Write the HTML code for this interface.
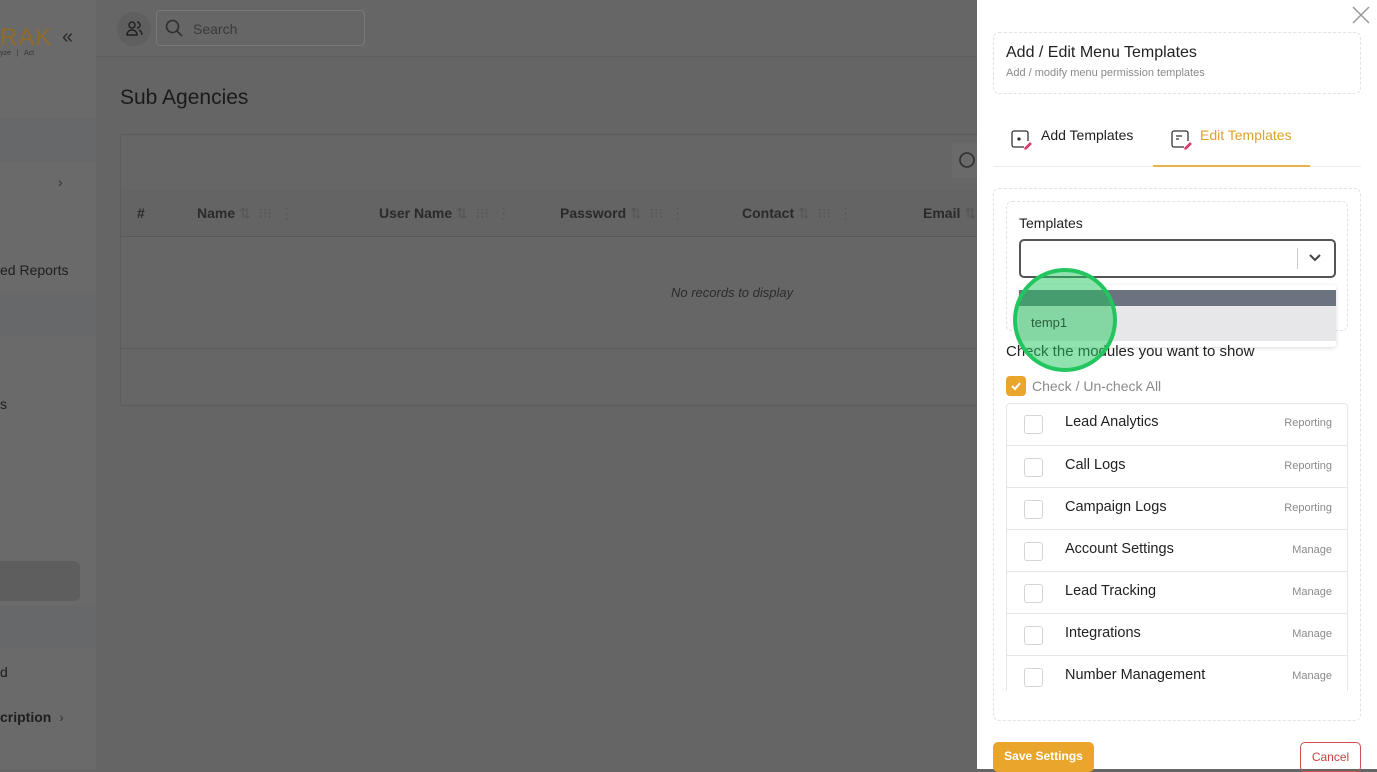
<!DOCTYPE html>
<html><head><meta charset="utf-8"><style>
*{box-sizing:border-box;margin:0;padding:0}
body{width:1377px;height:769px;overflow:hidden;position:relative;background:#656565;font-family:"Liberation Sans",sans-serif;color:#222}
.a{position:absolute}
.side{left:0;top:0;width:96px;height:769px;background:#6a6a6a}
.hdr{left:96px;top:0;width:881px;height:57px;background:#666;border-bottom:1px solid #5e5e5e}
.th{font-weight:bold;font-size:14px;color:#2a2a2a}
.dr{left:977px;top:0;width:400px;height:769px;background:#fff}
.dash{border:1px dashed #e2e2e2;border-radius:6px}
.row{position:absolute;left:0;width:340px;height:42px;border-top:1px solid #e6e6e6}
.cb{position:absolute;left:17px;top:12px;width:19px;height:19px;border:1px solid #d5d5d5;border-radius:3px}
.rl{position:absolute;left:58px;top:11px;font-size:14.5px;color:#222}
.rt{position:absolute;right:15px;top:14px;font-size:11px;color:#8a8a8a}
</style></head><body>
<div class="a side"></div>
<div class="a" style="left:0;top:118px;width:96px;height:44px;background:#676869"></div>
<div class="a" style="left:0;top:293px;width:96px;height:44px;background:#676869"></div>
<div class="a" style="left:0;top:605px;width:96px;height:44px;background:#676869"></div>
<div class="a" style="left:0;top:561px;width:80px;height:40px;background:#5e5e5e;border-radius:0 6px 6px 0"></div>
<div class="a" style="left:0;top:24px;font-size:24px;color:#8f6c2c;letter-spacing:1px">RAK</div>
<div class="a" style="left:62px;top:26px;font-size:20px;color:#2a2a2a">«</div>
<div class="a" style="left:0;top:50px;font-size:7px;color:#333">yze &nbsp; | &nbsp; Act</div>
<div class="a" style="left:58px;top:174px;font-size:14px;color:#333">›</div>
<div class="a" style="left:0;top:262px;font-size:14px;color:#1e1e1e">ed Reports</div>
<div class="a" style="left:0;top:396px;font-size:14px;color:#1e1e1e">s</div>
<div class="a" style="left:0;top:664px;font-size:14px;color:#1e1e1e">d</div>
<div class="a" style="left:0;top:709px;font-size:14px;font-weight:bold;color:#1e1e1e">cription <span style="font-weight:normal;color:#333">&nbsp;›</span></div>
<div class="a hdr"></div>
<div class="a" style="left:117px;top:12px;width:34px;height:34px;border-radius:50%;background:#5f5f5f"></div>
<svg class="a" style="left:124px;top:19px" width="20" height="20" viewBox="0 0 20 20" fill="none" stroke="#222" stroke-width="1.5"><circle cx="8" cy="6" r="3"/><path d="M3 16c0-3 2-5 5-5s5 2 5 5zM13 3a3 3 0 010 6M15 11c2 1 3 3 3 5"/></svg>
<div class="a" style="left:156px;top:10px;width:209px;height:36px;border:1px solid #7a7a7a;border-radius:4px"></div>
<svg class="a" style="left:165px;top:19px" width="18" height="18" viewBox="0 0 18 18" fill="none" stroke="#2f2f2f" stroke-width="1.6"><circle cx="7.5" cy="7.5" r="6"/><path d="M12 12l5 5"/></svg>
<div class="a" style="left:193px;top:21px;font-size:14px;color:#3a3a3a">Search</div>
<div class="a" style="left:120px;top:86px;font-size:21px;color:#1a1a1a">Sub Agencies</div>
<div class="a" style="left:120px;top:134px;width:870px;height:272px;background:#666;border:1px solid #5c5c5c;border-radius:3px"></div>
<div class="a" style="left:952px;top:143px;width:30px;height:35px;background:#6a6a6a"></div>
<svg class="a" style="left:958px;top:151px" width="20" height="20" viewBox="0 0 20 20" fill="none" stroke="#2e2e2e" stroke-width="1.6"><circle cx="9" cy="9" r="7"/></svg>
<div class="a" style="left:121px;top:190px;width:860px;height:47px;background:#646464;border-bottom:1px solid #585858"></div>
<div class="a th" style="left:137px;top:205px">#</div>
<div class="a th" style="left:197px;top:205px">Name<span style="color:#555;font-weight:normal"> ⇅ &nbsp;⁝⁝⁝ &nbsp;⋮</span></div>
<div class="a th" style="left:379px;top:205px">User Name<span style="color:#555;font-weight:normal"> ⇅ &nbsp;⁝⁝⁝ &nbsp;⋮</span></div>
<div class="a th" style="left:560px;top:205px">Password<span style="color:#555;font-weight:normal"> ⇅ &nbsp;⁝⁝⁝ &nbsp;⋮</span></div>
<div class="a th" style="left:742px;top:205px">Contact<span style="color:#555;font-weight:normal"> ⇅ &nbsp;⁝⁝⁝ &nbsp;⋮</span></div>
<div class="a th" style="left:923px;top:205px">Email<span style="color:#555;font-weight:normal"> ⇅</span></div>
<div class="a" style="left:671px;top:285px;font-size:13px;font-style:italic;color:#2c2c2c">No records to display</div>
<div class="a" style="left:121px;top:348px;width:860px;height:1px;background:#5a5a5a"></div>

<div class="a dr"></div>
<svg class="a" style="left:1352px;top:6px" width="18" height="18" viewBox="0 0 18 18" stroke="#999" stroke-width="1.5"><path d="M1 1l16 16M17 1L1 17"/></svg>
<div class="a dash" style="left:993px;top:32px;width:368px;height:62px"></div>
<div class="a" style="left:1006px;top:44px;font-size:16px;color:#222">Add / Edit Menu Templates</div>
<div class="a" style="left:1006px;top:67px;font-size:11px;color:#8a8a8a">Add / modify menu permission templates</div>
<svg class="a" style="left:1010px;top:128px" width="22" height="22" viewBox="0 0 22 22" fill="none" stroke="#333" stroke-width="1.3"><path d="M14 19H4a2 2 0 01-2-2V5a2 2 0 012-2h12a2 2 0 012 2v8"/><circle cx="9" cy="11" r="1" fill="#333"/><path d="M15 20l5-5 1 1-5 5h-1z" stroke="#d2336a"/></svg>
<div class="a" style="left:1041px;top:127px;font-size:14px;color:#222">Add Templates</div>
<svg class="a" style="left:1170px;top:128px" width="22" height="22" viewBox="0 0 22 22" fill="none" stroke="#333" stroke-width="1.3"><path d="M14 19H4a2 2 0 01-2-2V5a2 2 0 012-2h12a2 2 0 012 2v8M6 8h6M6 11h3"/><path d="M15 20l5-5 1 1-5 5h-1z" stroke="#d2336a"/></svg>
<div class="a" style="left:1200px;top:127px;font-size:14px;color:#e0a22a">Edit Templates</div>
<div class="a" style="left:993px;top:166px;width:368px;height:1px;background:#ececec"></div>
<div class="a" style="left:1153px;top:165px;width:157px;height:2px;background:#e8b14a"></div>
<div class="a dash" style="left:993px;top:188px;width:368px;height:533px"></div>
<div class="a dash" style="left:1006px;top:201px;width:342px;height:130px"></div>
<div class="a" style="left:1019px;top:215px;font-size:14px;color:#222">Templates</div>
<div class="a" style="left:1019px;top:239px;width:317px;height:39px;border:2px solid #555;border-radius:5px"></div>
<div class="a" style="left:1297px;top:248px;width:1px;height:21px;background:#ccc"></div>
<svg class="a" style="left:1308px;top:253px" width="14" height="10" viewBox="0 0 14 10" fill="none" stroke="#444" stroke-width="2"><path d="M2 2l5 5 5-5"/></svg>
<div class="a" style="left:1019px;top:285px;width:317px;height:62px;background:#fff;box-shadow:0 1px 4px rgba(0,0,0,.15);border-radius:3px"></div>
<div class="a" style="left:1019px;top:290px;width:317px;height:16px;background:#6b7280"></div>
<div class="a" style="left:1019px;top:306px;width:317px;height:35px;background:#e7e7e9"></div>
<div class="a" style="left:1006px;top:343px;font-size:15px;color:#222">Check the modules you want to show</div>
<div class="a" style="left:1013px;top:268px;width:104px;height:104px;border-radius:50%;background:rgba(34,197,94,.5);border:4px solid #22c55e"></div>
<div class="a" style="left:1031px;top:315px;font-size:13px;color:#2d5f3d">temp1</div>
<div class="a" style="left:1006px;top:376px;width:20px;height:20px;background:#e9a52c;border-radius:4px"></div>
<svg class="a" style="left:1009px;top:379px" width="14" height="14" viewBox="0 0 14 14" fill="none" stroke="#fff" stroke-width="2"><path d="M3 7l3 3 5-6"/></svg>
<div class="a" style="left:1032px;top:378px;font-size:14px;color:#8a8a8a">Check / Un-check All</div>
<div class="a" style="left:1006px;top:403px;width:342px;height:288px;border:1px solid #e6e6e6;border-bottom:none;border-radius:4px 4px 0 0;overflow:hidden">
<div class="row" style="top:-1px;border-top:none"><div class="cb"></div><div class="rl">Lead Analytics</div><div class="rt">Reporting</div></div>
<div class="row" style="top:41px"><div class="cb"></div><div class="rl">Call Logs</div><div class="rt">Reporting</div></div>
<div class="row" style="top:83px"><div class="cb"></div><div class="rl">Campaign Logs</div><div class="rt">Reporting</div></div>
<div class="row" style="top:125px"><div class="cb"></div><div class="rl">Account Settings</div><div class="rt">Manage</div></div>
<div class="row" style="top:167px"><div class="cb"></div><div class="rl">Lead Tracking</div><div class="rt">Manage</div></div>
<div class="row" style="top:209px"><div class="cb"></div><div class="rl">Integrations</div><div class="rt">Manage</div></div>
<div class="row" style="top:251px"><div class="cb"></div><div class="rl">Number Management</div><div class="rt">Manage</div></div>
</div>
<div class="a" style="left:993px;top:742px;width:101px;height:30px;background:#e9a52c;border-radius:5px;color:#fff;font-size:12px;font-weight:bold;text-align:center;line-height:29px">Save Settings</div>
<div class="a" style="left:1300px;top:742px;width:61px;height:30px;border:1px solid #d05050;border-radius:5px;color:#d04040;font-size:12px;text-align:center;line-height:28px">Cancel</div>
</body></html>
